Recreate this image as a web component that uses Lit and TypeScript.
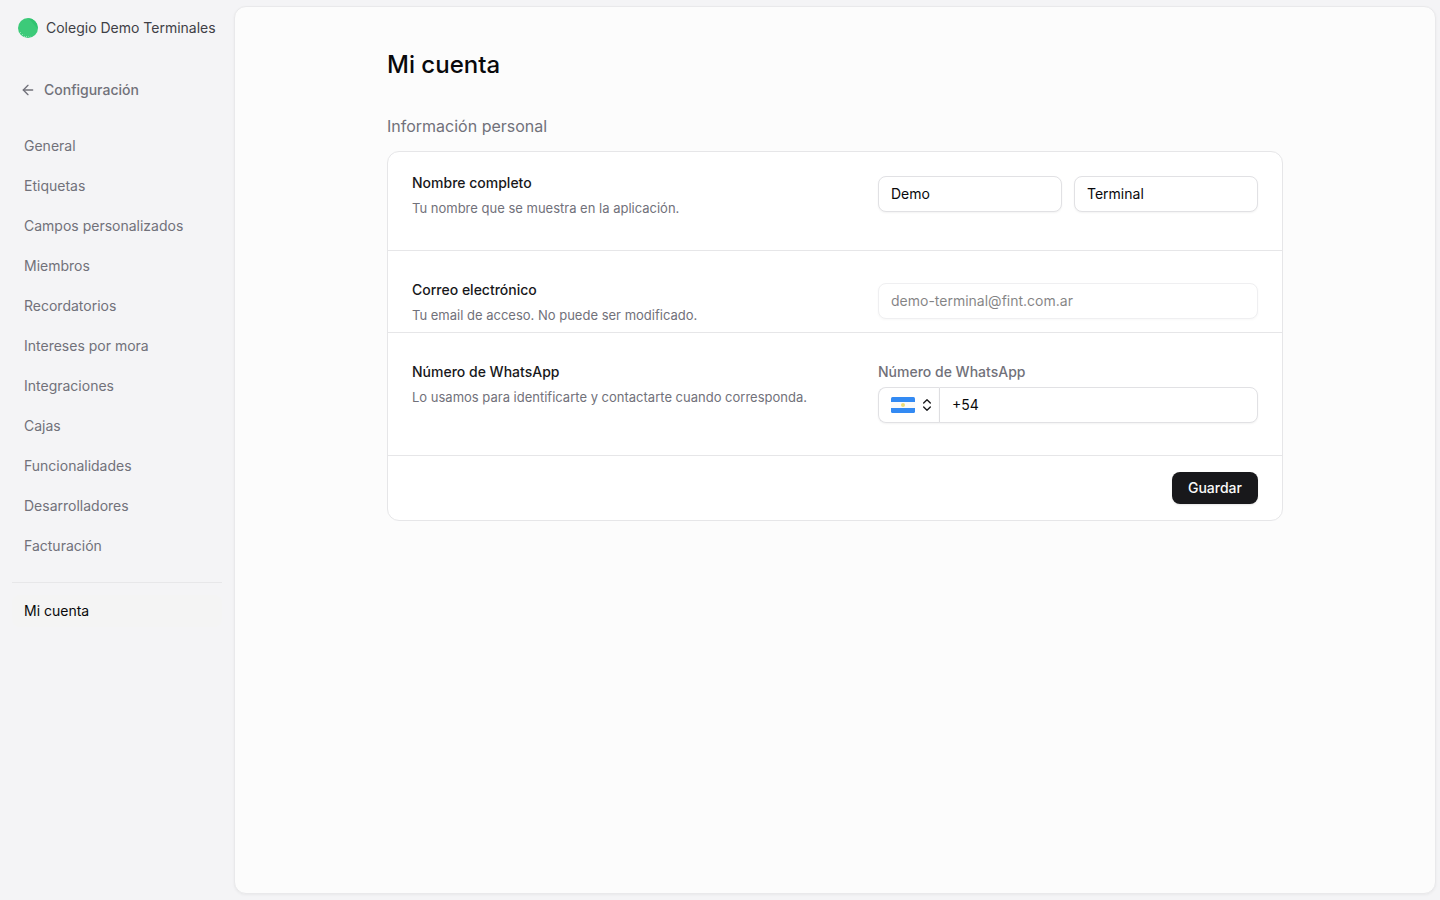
import { LitElement, html, css } from "lit";
import { customElement, state } from "lit/decorators.js";

const SECTIONS = [
  "General",
  "Etiquetas",
  "Campos personalizados",
  "Miembros",
  "Recordatorios",
  "Intereses por mora",
  "Integraciones",
  "Cajas",
  "Funcionalidades",
  "Desarrolladores",
  "Facturación",
];

@customElement("settings-sidebar")
class SettingsSidebar extends LitElement {
  static styles = css`
    :host {
      display: flex;
      flex-direction: column;
      box-sizing: border-box;
      padding: 12px;
      font-size: 14px;
      line-height: 20px;
      color: #71717a;
    }
    a {
      color: inherit;
      text-decoration: none;
    }
    .brand {
      display: flex;
      align-items: center;
      gap: 8px;
      height: 32px;
      padding: 0 6px;
      color: #3f3f46;
      white-space: nowrap;
    }
    .logo {
      flex: none;
      width: 20px;
      height: 20px;
    }
    .back {
      display: flex;
      align-items: center;
      gap: 8px;
      height: 32px;
      margin: 30px 0 24px;
      padding: 0 8px;
      font-weight: 500;
    }
    .list {
      display: flex;
      flex-direction: column;
      gap: 8px;
      margin: 0;
      padding: 0;
      list-style: none;
    }
    .item {
      display: flex;
      align-items: center;
      height: 32px;
      padding: 0 12px;
      border-radius: 8px;
    }
    .item.active {
      background: #f4f4f4;
      color: #09090b;
    }
    .divider {
      width: 100%;
      height: 1px;
      margin: 20px 0 12px;
      border: 0;
      background: #e7e7e9;
    }
  `;

  render() {
    return html`
      <a class="brand" href="#inicio">
        <svg class="logo" viewBox="0 0 20 20" aria-hidden="true">
          <defs>
            <pattern id="dots" width="2" height="2" patternUnits="userSpaceOnUse">
              <rect width="1" height="1" fill="#8fe3b0" />
            </pattern>
            <clipPath id="disc"><circle cx="10" cy="10" r="10" /></clipPath>
          </defs>
          <g clip-path="url(#disc)">
            <rect width="20" height="20" fill="#3cca79" />
            <path d="M10 0A10 10 0 0 1 20 10L18 9 13 3Z" fill="#30c370" />
            <path d="M0 11Q5 18 14 19L10 20H0Z" fill="url(#dots)" />
          </g>
        </svg>
        <span>Colegio Demo Terminales</span>
      </a>
      <a class="back" href="#configuracion">
        <svg width="16" height="16" viewBox="0 0 24 24" fill="none" stroke="currentColor" stroke-width="2" stroke-linecap="round" stroke-linejoin="round" aria-hidden="true">
          <path d="m12 19-7-7 7-7" />
          <path d="M19 12H5" />
        </svg>
        <span>Configuración</span>
      </a>
      <nav>
        <ul class="list">
          ${SECTIONS.map((s) => html`<li><a class="item" href="#${s}">${s}</a></li>`)}
        </ul>
        <hr class="divider" />
        <a class="item active" href="#cuenta" aria-current="page">Mi cuenta</a>
      </nav>
    `;
  }
}

@customElement("account-form")
class AccountForm extends LitElement {
  static styles = css`
    :host {
      display: block;
      font-size: 14px;
      line-height: 20px;
    }
    .card {
      border: 1px solid #e6e6e8;
      border-radius: 12px;
      background: #fff;
    }
    .row {
      display: flex;
      align-items: flex-start;
      justify-content: space-between;
      gap: 32px;
      padding: 32px 24px;
      border-bottom: 1px solid #e6e6e8;
    }
    .row.first {
      padding-top: 24px;
    }
    .row.tight {
      padding-bottom: 7px;
    }
    .info {
      display: flex;
      flex-direction: column;
      gap: 8px;
    }
    .title {
      font-weight: 500;
      line-height: 14px;
      color: #18181b;
    }
    .hint {
      margin: 0;
      font-size: 13px;
      color: #71717a;
    }
    .controls {
      display: flex;
      flex: 0 1 380px;
      gap: 12px;
      min-width: 0;
    }
    .controls.stacked {
      flex-direction: column;
      gap: 8px;
    }
    .caption {
      font-weight: 500;
      line-height: 14px;
      color: #71717a;
    }
    .field {
      box-sizing: border-box;
      flex: 1;
      min-width: 0;
      width: 100%;
      height: 36px;
      padding: 0 12px 2px;
      border: 1px solid #e1e1e4;
      border-radius: 8px;
      background: #fff;
      box-shadow: 0 1px 2px rgba(0, 0, 0, 0.05);
      color: #09090b;
      font: inherit;
    }
    .field:disabled {
      opacity: 0.5;
    }
    .phone {
      display: flex;
    }
    .phone .field {
      border-radius: 0 8px 8px 0;
    }
    .country {
      position: relative;
      display: flex;
      align-items: center;
      gap: 4px;
      box-sizing: border-box;
      height: 36px;
      padding: 0 4px 0 12px;
      border: 1px solid #e1e1e4;
      border-right: 0;
      border-radius: 8px 0 0 8px;
      box-shadow: 0 1px 2px rgba(0, 0, 0, 0.05);
      color: #18181b;
    }
    .country select {
      position: absolute;
      inset: 0;
      width: 100%;
      opacity: 0;
      font: inherit;
    }
    .footer {
      display: flex;
      justify-content: flex-end;
      padding: 16px 24px;
    }
    .save {
      height: 32px;
      padding: 0 16px;
      border: 0;
      border-radius: 8px;
      background: #18181b;
      box-shadow: 0 1px 2px rgba(0, 0, 0, 0.1);
      color: #fafafa;
      font: inherit;
      font-weight: 500;
    }
  `;

  @state() private phone = "+54";

  render() {
    return html`
      <form class="card" @submit=${(e: Event) => e.preventDefault()}>
        <div class="row first">
          <div class="info">
            <label class="title" for="first-name">Nombre completo</label>
            <p class="hint">Tu nombre que se muestra en la aplicación.</p>
          </div>
          <div class="controls">
            <input class="field" id="first-name" type="text" value="Demo" />
            <input class="field" type="text" value="Terminal" aria-label="Apellido" />
          </div>
        </div>
        <div class="row tight">
          <div class="info">
            <label class="title" for="email">Correo electrónico</label>
            <p class="hint">Tu email de acceso. No puede ser modificado.</p>
          </div>
          <div class="controls">
            <input class="field" id="email" type="email" value="demo-terminal@fint.com.ar" disabled />
          </div>
        </div>
        <div class="row">
          <div class="info">
            <span class="title">Número de WhatsApp</span>
            <p class="hint">Lo usamos para identificarte y contactarte cuando corresponda.</p>
          </div>
          <div class="controls stacked">
            <label class="caption" for="phone">Número de WhatsApp</label>
            <div class="phone">
              <div class="country">
                <svg width="24" height="16" viewBox="0 0 24 16" aria-hidden="true">
                  <clipPath id="flag"><rect width="24" height="16" rx="1.5" /></clipPath>
                  <g clip-path="url(#flag)">
                    <rect width="24" height="16" fill="#338af3" />
                    <rect y="5" width="24" height="6" fill="#fafafa" />
                    <circle cx="12" cy="8" r="2" fill="#ecdc78" />
                  </g>
                </svg>
                <svg width="16" height="16" viewBox="0 0 24 24" fill="none" stroke="currentColor" stroke-width="2" stroke-linecap="round" stroke-linejoin="round" aria-hidden="true">
                  <path d="m7 15 5 5 5-5" />
                  <path d="m7 9 5-5 5 5" />
                </svg>
                <select aria-label="País">
                  <option>Argentina</option>
                  <option>Chile</option>
                  <option>Uruguay</option>
                </select>
              </div>
              <input
                class="field"
                id="phone"
                type="tel"
                .value=${this.phone}
                @input=${(e: Event) => (this.phone = (e.target as HTMLInputElement).value)}
              />
            </div>
          </div>
        </div>
        <div class="footer">
          <button class="save" type="submit">Guardar</button>
        </div>
      </form>
    `;
  }
}

@customElement("app-root")
class AppRoot extends LitElement {
  static styles = css`
    :host {
      display: flex;
      box-sizing: border-box;
      min-height: 100vh;
      background: #f4f4f6;
      font-family: Inter, "Liberation Sans", sans-serif;
    }
    .sidebar {
      flex: 0 0 234px;
    }
    .panel {
      flex: 1;
      box-sizing: border-box;
      min-width: 0;
      margin: 6px 4px 6px 0;
      padding: 40px 24px;
      border: 1px solid #e9e9eb;
      border-radius: 12px;
      background: #fcfcfc;
      box-shadow: 0 1px 3px rgba(0, 0, 0, 0.05);
    }
    .content {
      max-width: 896px;
      margin: 0 auto;
    }
    .heading {
      margin: 0 0 32px;
      font-size: 24px;
      line-height: 36px;
      font-weight: 500;
      color: #09090b;
    }
    .subheading {
      margin: 0 0 14px;
      font-size: 16px;
      line-height: 22px;
      font-weight: 400;
      color: #71717a;
    }
  `;

  render() {
    return html`
      <settings-sidebar class="sidebar"></settings-sidebar>
      <main class="panel">
        <div class="content">
          <h1 class="heading">Mi cuenta</h1>
          <h2 class="subheading">Información personal</h2>
          <account-form></account-form>
        </div>
      </main>
    `;
  }
}
